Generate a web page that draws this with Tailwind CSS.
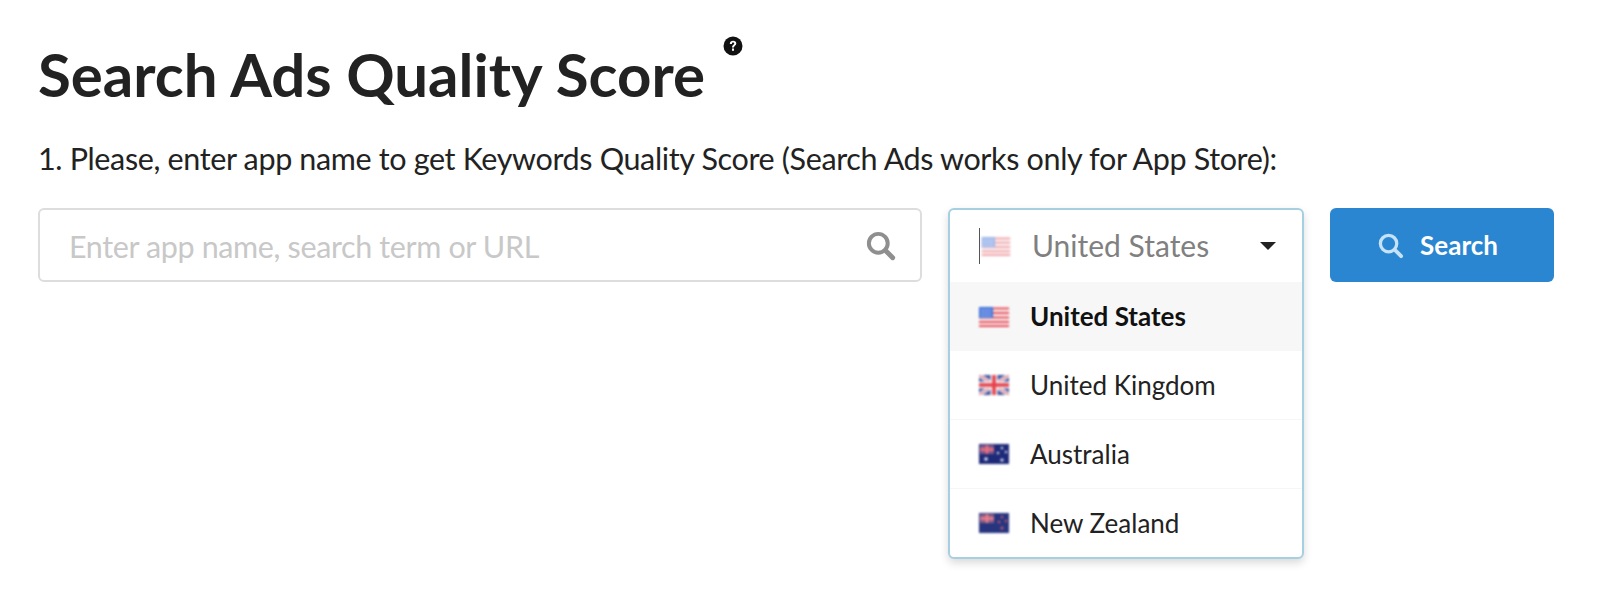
<!DOCTYPE html>
<html lang="en">
<head>
    <meta charset="UTF-8">
    <title>Search Ads Quality Score</title>
    <script src="https://cdn.jsdelivr.net/npm/@tailwindcss/browser@4"></script>
</head>
<body class="bg-white h-[608px] overflow-hidden font-['Lato',sans-serif] text-[#222222]">
    <div class="pl-[38px] pr-[45px] pt-[32px]">
        <div class="flex items-start">
            <h1 class="text-[60px] leading-[84px] font-bold">Search Ads Quality Score</h1>
            <svg class="w-[20px] h-[20px] ml-[18px] mt-[4px]" viewBox="0 0 20 20">
                <circle cx="10" cy="10" r="9.5" fill="#111"/>
                <path d="M6.8 8 C6.8 5.8 8.3 4.8 10.1 4.8 C12 4.8 13.3 5.9 13.3 7.5 C13.3 9.6 10.9 9.7 10.9 11.6 L9 11.6 C9 9 11.2 8.9 11.2 7.6 C11.2 7 10.8 6.6 10.1 6.6 C9.3 6.6 8.9 7.1 8.9 8 Z M9 12.6 H11 V14.8 H9 Z" fill="#fff"/>
            </svg>
        </div>
        <p class="mt-[24px] text-[30.5px] tracking-[-0.35px] leading-[36px]">1. Please, enter app name to get Keywords Quality Score (Search Ads works only for App Store):</p>
        <div class="mt-[32px] flex items-start">
            <div class="w-[884px] h-[74px] border-2 border-[#dddddd] rounded-[6px] flex items-center pl-[29px] pr-[24px]">
                <span class="flex-1 pt-[3px] text-[30.5px] tracking-[-0.37px] text-[#c8c8c8]">Enter app name, search term or URL</span>
                <svg class="w-[31px] h-[31px]" viewBox="0 0 28 28" fill="none" stroke="#8f8f8f">
                    <circle cx="12" cy="12" r="8.5" stroke-width="3.6"/>
                    <path d="M18.5 18.5 L25 25" stroke-width="4.4" stroke-linecap="round"/>
                </svg>
            </div>
            <div class="relative w-[356px] h-[74px] ml-[26px]">
                <div class="absolute top-0 left-0 w-[356px] bg-white border-2 border-[#a6d0e2] rounded-[6px] shadow-[0_4px_8px_rgba(0,0,0,0.15)]">
                    <div class="h-[72px] flex items-center pl-[29px] pr-[26px]">
                        <span class="w-px h-[36px] bg-[#555555]"></span>
                        <svg class="w-[30px] h-[19px] ml-px opacity-50 blur-[0.8px]" viewBox="0 0 30 20">
                            <rect width="30" height="20" fill="#f5f0f0"/>
                            <path d="M0 1.5H30M0 6H30M0 10.5H30M0 15H30M0 19H30" stroke="#e8505b" stroke-width="2"/>
                            <rect width="14" height="11" fill="#3f6fd8"/>
                            <path d="M2 3h10M2 6h10M2 9h10" stroke="#dfe8ff" stroke-width="1.4" stroke-dasharray="1.4 1.4"/>
                        </svg>
                        <span class="flex-1 ml-[21px] pb-[2px] text-[30px] text-[#808080]">United States</span>
                        <span class="w-0 h-0 border-x-[8px] border-x-transparent border-t-[8px] border-t-[#222222]"></span>
                    </div>
                    <div class="h-[69px] bg-[#f7f7f7] flex items-center pl-[29px] text-[26px] font-bold text-[#111111]">
                        <svg class="w-[30px] h-[20px] mr-[21px] blur-[0.8px]" viewBox="0 0 30 20">
                            <rect width="30" height="20" fill="#f5f0f0"/>
                            <path d="M0 1.5H30M0 6H30M0 10.5H30M0 15H30M0 19H30" stroke="#e8505b" stroke-width="2"/>
                            <rect width="14" height="11" fill="#3f6fd8"/>
                            <path d="M2 3h10M2 6h10M2 9h10" stroke="#dfe8ff" stroke-width="1.4" stroke-dasharray="1.4 1.4"/>
                        </svg>
                        United States
                    </div>
                    <div class="h-[69px] border-b border-[#f6f6f6] flex items-center pl-[29px] text-[26px]">
                        <svg class="w-[30px] h-[20px] mr-[21px] blur-[0.8px]" viewBox="0 0 30 20">
                            <rect width="30" height="20" fill="#45549c"/>
                            <path d="M0 0L30 20M30 0L0 20" stroke="#eeeef4" stroke-width="4"/>
                            <path d="M0 0L30 20M30 0L0 20" stroke="#e8707c" stroke-width="1.2"/>
                            <path d="M15 0V20M0 10H30" stroke="#f2f0f4" stroke-width="7"/>
                            <path d="M15 0V20M0 10H30" stroke="#e8404a" stroke-width="3.6"/>
                        </svg>
                        United Kingdom
                    </div>
                    <div class="h-[69px] border-b border-[#f6f6f6] flex items-center pl-[29px] text-[26px]">
                        <svg class="w-[30px] h-[20px] mr-[21px] blur-[0.8px]" viewBox="0 0 30 20">
                            <rect width="30" height="20" fill="#1e2a78"/>
                            <rect x="1" y="1" width="14" height="9" fill="#7d5a8e"/>
                            <path d="M8 1V10M1 5.5H15" stroke="#f0707c" stroke-width="2.4"/>
                            <circle cx="7" cy="15" r="1.8" fill="#dfe4f5"/>
                            <circle cx="23" cy="4" r="1.2" fill="#dfe4f5"/>
                            <circle cx="27" cy="8" r="1.2" fill="#dfe4f5"/>
                            <circle cx="19" cy="9" r="1.2" fill="#dfe4f5"/>
                            <circle cx="23" cy="16" r="1.6" fill="#dfe4f5"/>
                        </svg>
                        Australia
                    </div>
                    <div class="h-[68px] flex items-center pl-[29px] text-[26px]">
                        <svg class="w-[30px] h-[20px] mr-[21px] blur-[0.8px]" viewBox="0 0 30 20">
                            <rect width="30" height="20" fill="#27357f"/>
                            <rect x="1" y="1" width="14" height="9" fill="#8a5f88"/>
                            <path d="M8 1V10M1 5.5H15" stroke="#f0808a" stroke-width="2.4"/>
                            <circle cx="23" cy="4" r="1.3" fill="#c8586e"/>
                            <circle cx="27" cy="8" r="1.3" fill="#c8586e"/>
                            <circle cx="20" cy="9" r="1.3" fill="#c8586e"/>
                            <circle cx="23" cy="15" r="1.5" fill="#c8586e"/>
                        </svg>
                        New Zealand
                    </div>
                </div>
            </div>
            <button class="ml-[26px] w-[224px] h-[74px] pr-[9px] bg-[#2a86d1] rounded-[6px] flex items-center justify-center text-white text-[26px] font-bold">
                <svg class="w-[27px] h-[27px] mr-[16px]" viewBox="0 0 28 28" fill="none" stroke="#c5e2f6">
                    <circle cx="12" cy="12" r="8.5" stroke-width="3.4"/>
                    <path d="M18.5 18.5 L25 25" stroke-width="4" stroke-linecap="round"/>
                </svg>
                Search
            </button>
        </div>
    </div>
</body>
</html>
